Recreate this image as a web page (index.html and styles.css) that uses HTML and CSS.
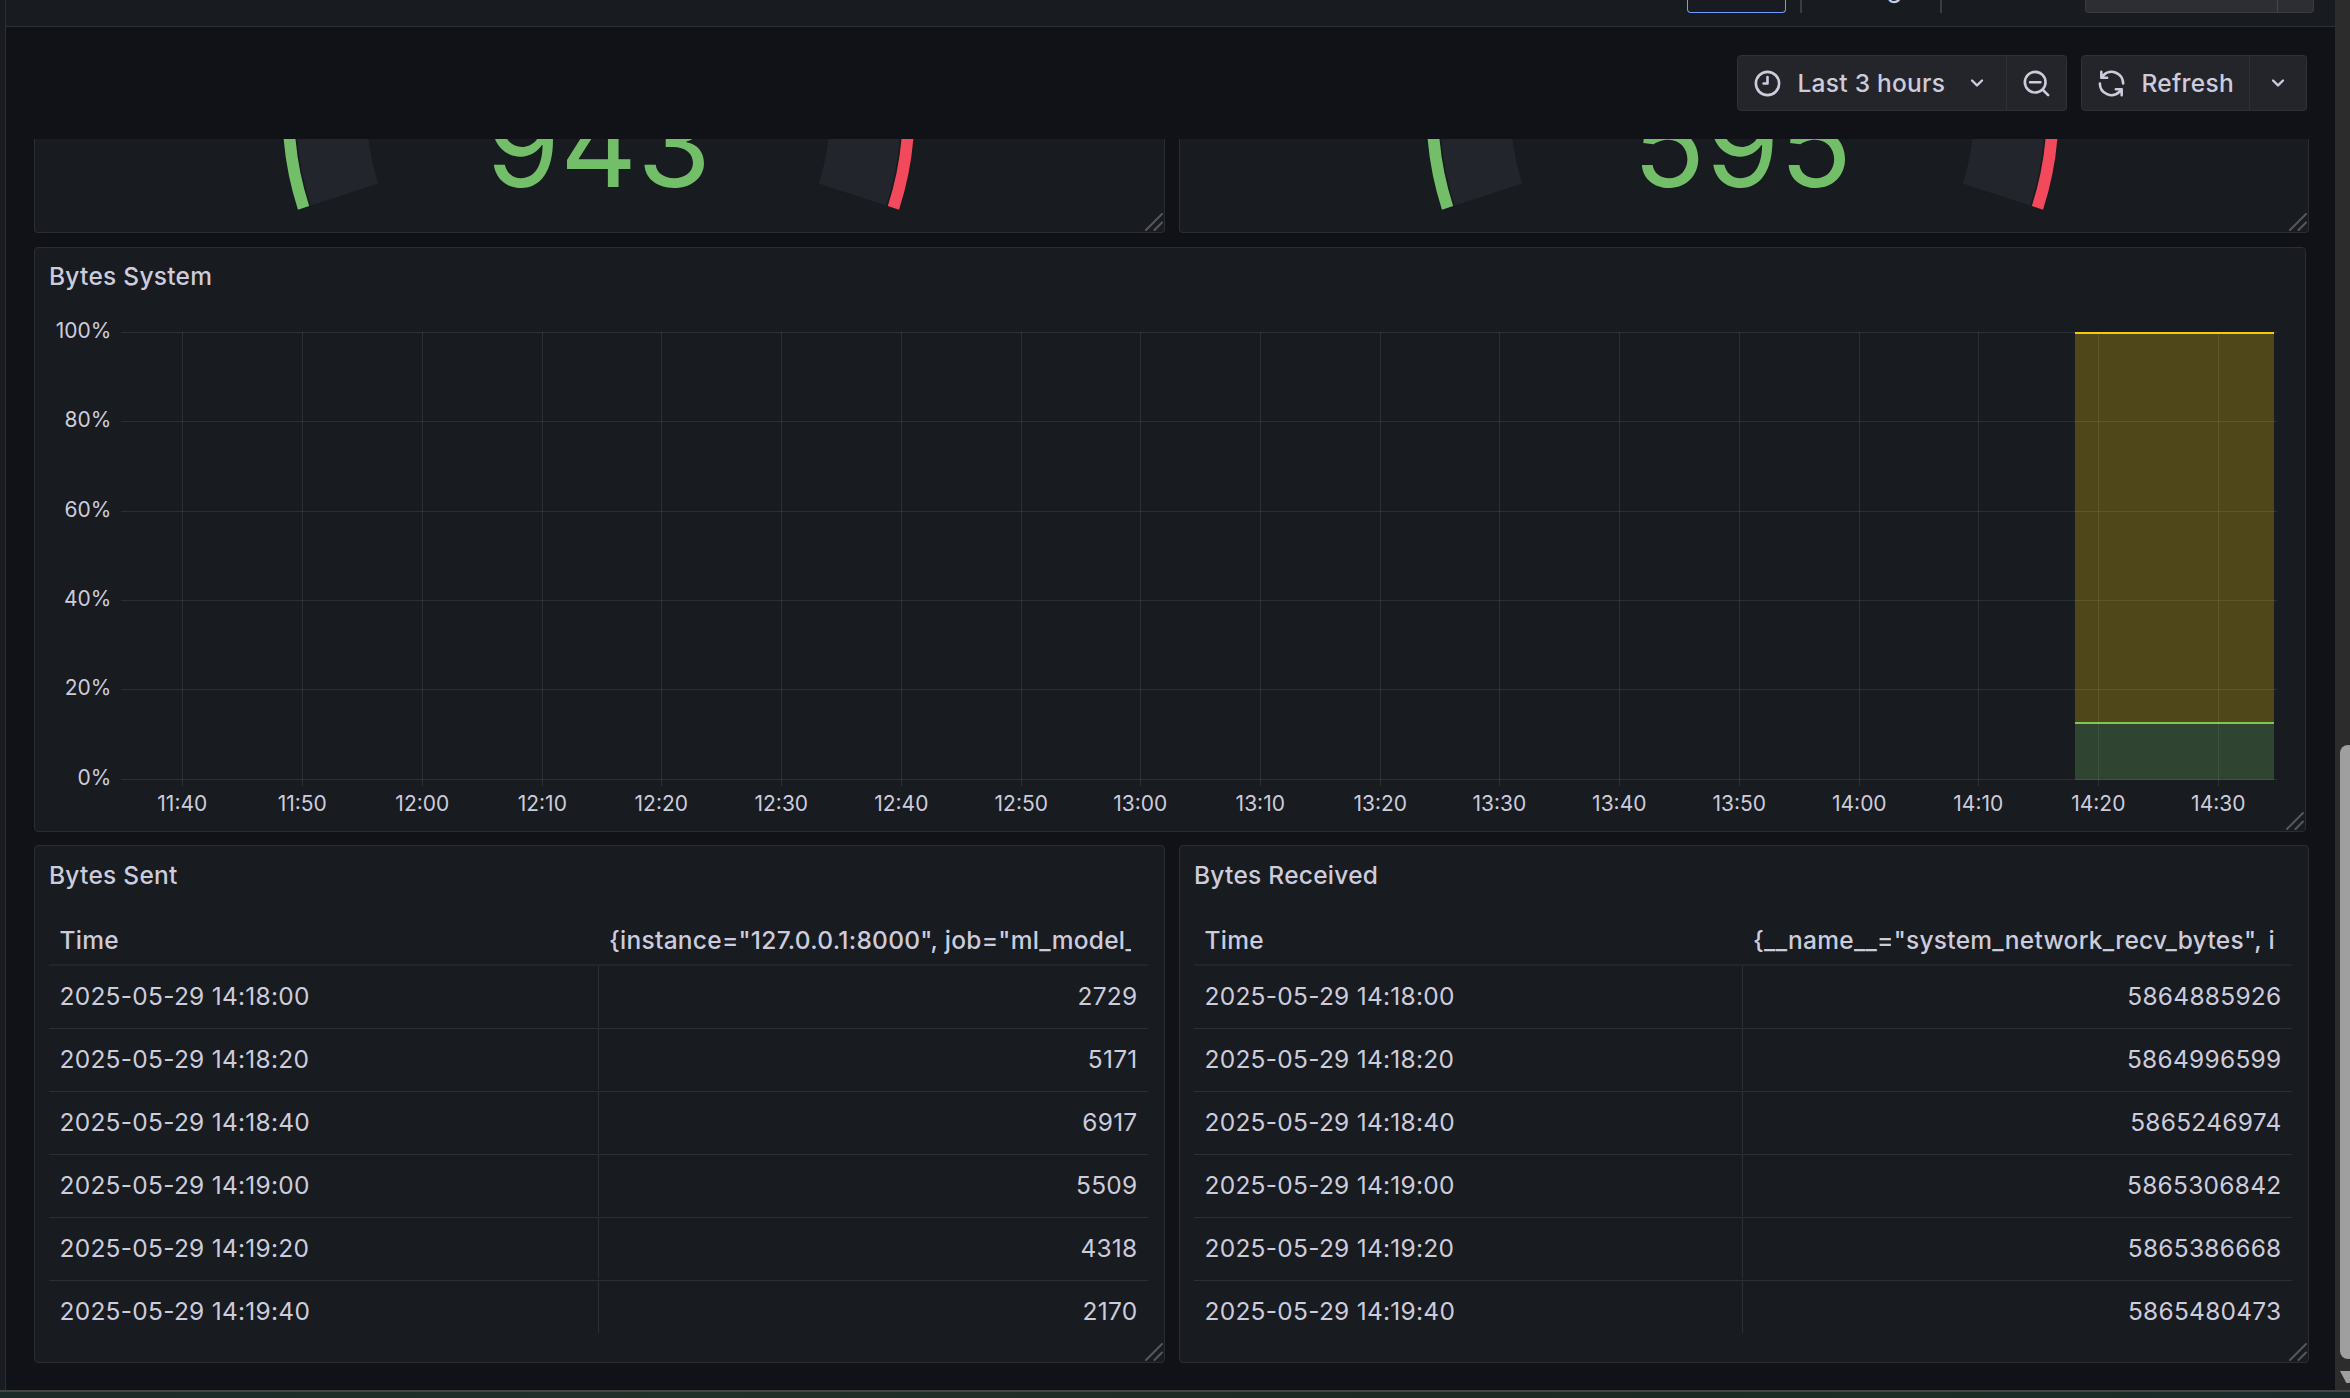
FILE: index.html
```
<!DOCTYPE html>
<html lang="en">
<head>
<meta charset="utf-8">
<title>Dashboard</title>
<link rel="stylesheet" href="styles.css">
</head>
<body>
<div class="screen">
  <div class="window">
    <aside class="rail"></aside>
    <main class="main">
      <header class="topbar">
        <div class="tb-add"></div>
        <div class="tb-sep"></div>
        <div class="tb-link">Settings</div>
        <div class="tb-sep"></div>
        <div class="tb-save"><span></span></div>
      </header>
      <div class="controls">
        <div class="group">
          <button class="btn range">
            <svg class="icon" viewBox="0 0 24 24"><path d="M12 2a10 10 0 1 0 10 10A10 10 0 0 0 12 2Zm0 18a8 8 0 1 1 8-8 8 8 0 0 1-8 8Zm0-14a1 1 0 0 0-1 1v4H9a1 1 0 0 0 0 2h3a1 1 0 0 0 1-1V7a1 1 0 0 0-1-1Z"/></svg>
            <span>Last 3 hours</span>
            <svg class="icon chev" viewBox="0 0 24 24"><path d="M17 9.17a1 1 0 0 0-1.41 0L12 12.71 8.46 9.17a1 1 0 0 0-1.41 0 1 1 0 0 0 0 1.42l4.24 4.24a1 1 0 0 0 1.42 0L17 10.59a1 1 0 0 0 0-1.42Z"/></svg>
          </button>
          <button class="btn zoomout">
            <svg class="icon" viewBox="0 0 24 24"><path d="M21.71 20.29 18 16.61A9 9 0 1 0 16.61 18l3.68 3.68a1 1 0 0 0 1.42 0 1 1 0 0 0 0-1.39ZM11 18a7 7 0 1 1 7-7 7 7 0 0 1-7 7Zm4-8H7a1 1 0 0 0 0 2h8a1 1 0 0 0 0-2Z"/></svg>
          </button>
        </div>
        <div class="group">
          <button class="btn refresh">
            <svg class="icon" viewBox="0 0 24 24"><path d="M19.91 15.51h-4.53a1 1 0 0 0 0 2h2.4A8 8 0 0 1 4 12a1 1 0 1 0-2 0 10 10 0 0 0 16.88 7.23V21a1 1 0 0 0 2 0v-4.5a1 1 0 0 0-.97-.99ZM12 2a10 10 0 0 0-6.88 2.77V3a1 1 0 0 0-2 0v4.5a1 1 0 0 0 1 1h4.5a1 1 0 0 0 0-2h-2.4A8 8 0 0 1 20 12a1 1 0 0 0 2 0A10 10 0 0 0 12 2Z"/></svg>
            <span>Refresh</span>
          </button>
          <button class="btn interval">
            <svg class="icon chev" viewBox="0 0 24 24"><path d="M17 9.17a1 1 0 0 0-1.41 0L12 12.71 8.46 9.17a1 1 0 0 0-1.41 0 1 1 0 0 0 0 1.42l4.24 4.24a1 1 0 0 0 1.42 0L17 10.59a1 1 0 0 0 0-1.42Z"/></svg>
          </button>
        </div>
      </div>
      <div class="row gauges">
        <section class="panel gauge"><svg viewBox="0 0 1129 93" id="g1"></svg><i class="grip"></i></section>
        <section class="panel gauge"><svg viewBox="0 0 1129 93" id="g2"></svg><i class="grip"></i></section>
      </div>
      <section class="panel system">
        <h2>Bytes System</h2>
        <svg class="chart" viewBox="35 300 2270 531" id="chart"></svg>
        <i class="grip"></i>
      </section>
      <div class="row tables">
        <section class="panel"><h2>Bytes Sent</h2><div class="table" id="sent"></div><i class="grip"></i></section>
        <section class="panel"><h2>Bytes Received</h2><div class="table" id="recv"></div><i class="grip"></i></section>
      </div>
    </main>
    <div class="scroll"><div class="thumb"></div><div class="arrow"></div></div>
  </div>
  <div class="desktop"></div>
</div>
<script src="app.js"></script>
</body>
</html>
```
FILE: styles.css
```
* { box-sizing: border-box; }
body { margin: 0; background: #111217; color: #ccccdc; font-family: Inter, "Liberation Sans", sans-serif; font-size: 24.5px; letter-spacing: 0.26px; overflow: hidden; }
.screen { width: 2350px; height: 1398px; display: flex; flex-direction: column; overflow: hidden; }
.window { height: 1390px; display: flex; }
.desktop { height: 8px; border-top: 2px solid #414844; background: linear-gradient(90deg, #1c2a28, #22302a 30%, #1c2822 60%, #1b2d24 80%, #1a2a2a); }
.rail { width: 6px; background: #181b1f; border-right: 1px solid #2c2e33; }
.main { width: 2329px; display: flex; flex-direction: column; }
.scroll { width: 15px; background: #2c2c2c; padding: 745px 0 0 5px; overflow: hidden; }
.thumb { width: 16px; height: 614px; border-radius: 8px; background: #9f9f9f; }
.arrow { width: 16px; height: 12px; margin-top: 12px; background: #9f9f9f; clip-path: polygon(0 0, 100% 0, 60% 100%, 40% 100%); }

.topbar { height: 27px; background: #181b1f; border-bottom: 1px solid #2f3136; display: flex; padding-left: 1681px; }
.tb-add { width: 99px; height: 13px; border: 1px solid #6e9fff; border-top: 0; border-radius: 0 0 4px 4px; }
.tb-sep { width: 2px; height: 13px; background: #3a3c42; margin-left: 14px; }
.tb-link { width: 124px; margin-left: 14px; height: 13px; line-height: 29px; margin-right: -14px; padding-left: 2px; font-weight: 500; margin-top: -25px; }
.tb-save { width: 229px; height: 13px; margin-left: 143px; background: #2d2e33; border: 1px solid #3a3b41; border-top: 0; border-radius: 0 0 4px 4px; display: flex; }
.tb-save span { width: 192px; border-right: 1px solid #45464c; }

.controls { height: 112px; display: flex; justify-content: flex-end; gap: 14px; padding: 28px 28px 0 0; }
.group { display: flex; height: 56px; }
.btn { display: flex; align-items: center; height: 56px; padding: 0; background: #24252b; border: 1px solid #303136; color: #ccccdc; font: 500 24.5px Inter, "Liberation Sans", sans-serif; letter-spacing: 0.26px; white-space: nowrap; }
.group .btn:first-child { border-radius: 4px 0 0 4px; }
.group .btn:last-child { border-radius: 0 4px 4px 0; border-left: 0; }
.icon { width: 31px; height: 31px; flex: none; fill: #ccccdc; }
.chev { width: 28px; height: 28px; }
.range { width: 270px; padding-left: 14px; }
.range span { margin-left: 14.5px; width: 157px; text-align: left; }
.range .chev { margin-left: 8.5px; }
.zoomout { width: 60px; padding-left: 14px; }
.refresh { width: 169px; padding-left: 14px; }
.refresh span { margin-left: 14.5px; }
.interval { width: 57px; padding-left: 14px; }

.panel { position: relative; background: #181b1f; border: 1px solid #2b2d32; border-radius: 4px; overflow: hidden; }
.panel h2 { margin: 0; padding-left: 14px; font-size: 24.5px; font-weight: 500; line-height: 56px; letter-spacing: 0.26px; }
.row { display: grid; grid-template-columns: 1131px 1130px; gap: 14px; margin-left: 28px; }
.gauges { height: 94px; }
.gauge { border-top: 0; border-radius: 0 0 4px 4px; }
.gauge svg { display: block; width: 1129px; height: 93px; }
.gauge .grip svg { width: 18px; height: 18px; }
.num { fill: #73bf69; font-weight: 400; font-size: 119.5px; text-anchor: middle; letter-spacing: 0; }
.system { width: 2272px; height: 585px; margin: 14px 0 0 28px; }
.chart { position: absolute; left: 0; top: 52px; width: 2270px; height: 531px; }
.chart text { fill: #ccccdc; font-size: 21px; letter-spacing: 0; }
.tables { height: 518px; margin-top: 13px; }
.tables h2 { padding-top: 1px; }
.grip { position: absolute; right: 1px; bottom: 1px; width: 18px; height: 18px; }
.grip svg { display: block; }

.table { margin: 7px 16px 0 14px; }
.tr { display: grid; grid-template-columns: 1fr 550px; height: 63px; border-bottom: 1px solid #2d2f34; line-height: 61px; }
.tr > * { padding: 0 10.5px; overflow: hidden; white-space: nowrap; }
.tr b { font-weight: 400; text-align: right; border-left: 1px solid #2d2f34; margin-bottom: 1px; }
.tr.head { height: 56px; border-bottom: 2px solid #232529; line-height: 61px; font-weight: 500; }
.tr.head > :last-child { padding: 0; margin: 0 17px 0 11px; }
.tr:last-child { height: 53px; border-bottom: 0; }
```
FILE: app.js
```
const byId = id => document.getElementById(id);

function gauge(id, cx, value) {
  const cy = -27, a = 18 * Math.PI / 180;
  const ring = (ro, ri, side, fill) => {
    const c = Math.cos(a), s = Math.sin(a), sw = side < 0 ? 1 : 0;
    return `<path fill="${fill}" d="M${cx + side * ro * c} ${cy + ro * s}A${ro} ${ro} 0 0 ${sw} ${cx + side * ro} ${cy}L${cx + side * ri} ${cy}A${ri} ${ri} 0 0 ${1 - sw} ${cx + side * ri * c} ${cy + ri * s}Z"/>`;
  };
  byId(id).innerHTML =
    ring(302.5, 231.5, -1, '#22252b') + ring(302.5, 231.5, 1, '#22252b') +
    ring(316, 304.2, -1, '#73bf69') + ring(316, 304.2, 1, '#f2495c') +
    `<text class="num" x="${cx}" y="48">${value}</text>`;
}
gauge('g1', 563.5, '943');
gauge('g2', 562.5, '595');

let s = '';
const grid = 'rgba(240,250,255,0.09)';
for (let i = 0; i < 6; i++) {
  const y = Math.round(332 + i * 89.35);
  s += `<rect x="121" y="${y}" width="2156" height="1" fill="${grid}"/>`;
  s += `<text x="111.4" y="${y + 6}" text-anchor="end">${100 - i * 20}%</text>`;
}
for (let i = 0; i < 18; i++) {
  const x = Math.round(182.4 + i * 119.73), m = 40 + i * 10;
  s += `<rect x="${x}" y="332" width="1" height="454" fill="${grid}"/>`;
  s += `<text x="${x + 0.3}" y="811" text-anchor="middle">${11 + Math.floor(m / 60)}:${String(m % 60).padStart(2, '0')}</text>`;
}
s += `<rect x="2075" y="333" width="199" height="390" fill="#f2cc0c" fill-opacity=".25"/>
<rect x="2075" y="723" width="199" height="57" fill="#73bf69" fill-opacity=".25"/>
<rect x="2075" y="332" width="199" height="2" fill="#f2cc0c"/>
<rect x="2075" y="722" width="199" height="2" fill="#84c457"/>`;
byId('chart').innerHTML = s;

const times = ['14:18:00', '14:18:20', '14:18:40', '14:19:00', '14:19:20', '14:19:40'];
function table(id, head, vals) {
  byId(id).innerHTML = `<div class="tr head"><span>Time</span><span>${head}</span></div>` +
    times.map((t, i) => `<div class="tr"><span>2025-05-29 ${t}</span><b>${vals[i]}</b></div>`).join('');
}
table('sent', '{instance="127.0.0.1:8000", job="ml_model_', [2729, 5171, 6917, 5509, 4318, 2170]);
table('recv', '{__name__="system_network_recv_bytes", i',
  [5864885926, 5864996599, 5865246974, 5865306842, 5865386668, 5865480473]);

document.querySelectorAll('.grip').forEach(g => {
  g.innerHTML = '<svg width="18" height="18"><path d="M1 17 17 1M9.5 17 17 9.5" stroke="#55585d" stroke-width="2" stroke-linecap="round"/></svg>';
});
```
